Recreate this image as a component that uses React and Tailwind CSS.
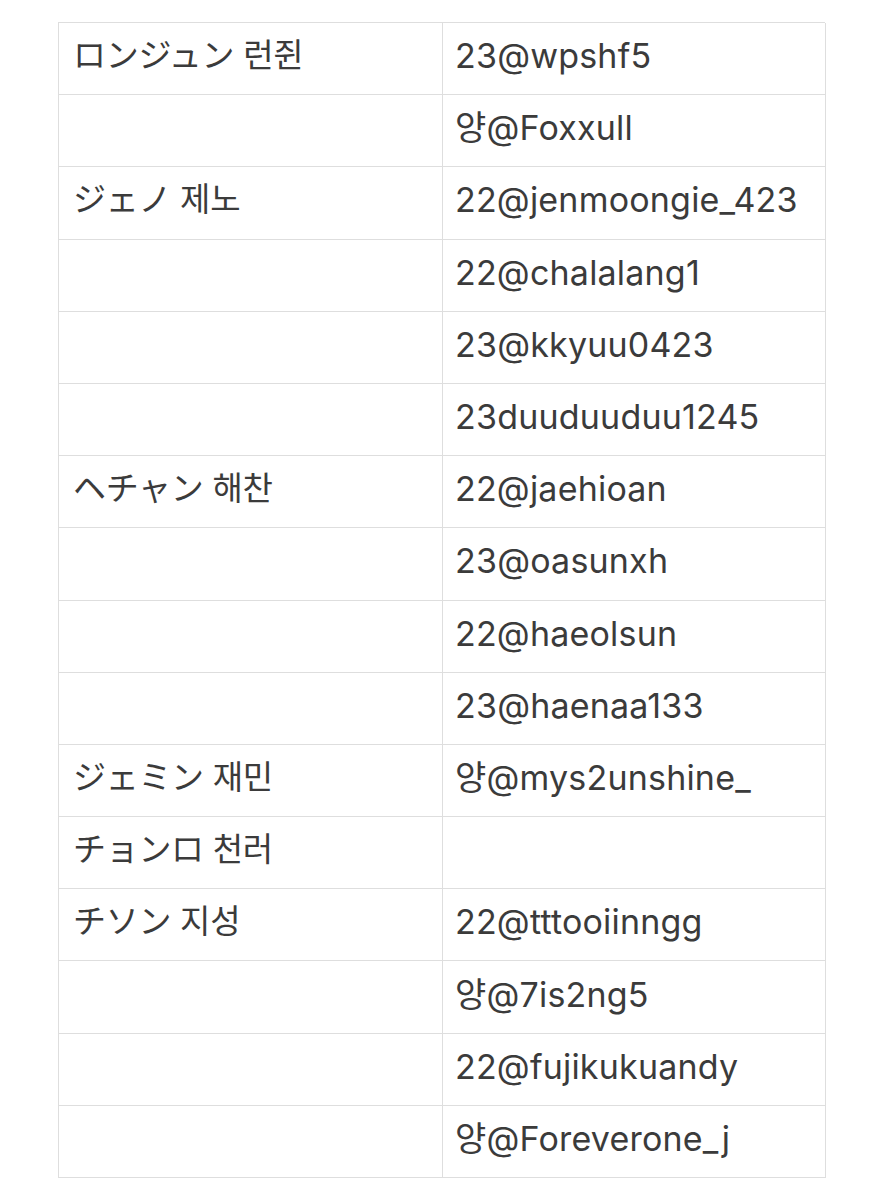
const rows = [
  ['ロンジュン 런쥔', '23@wpshf5'],
  ['', '양@Foxxull'],
  ['ジェノ 제노', '22@jenmoongie_423'],
  ['', '22@chalalang1'],
  ['', '23@kkyuu0423'],
  ['', '23duuduuduu1245'],
  ['ヘチャン 해찬', '22@jaehioan'],
  ['', '23@oasunxh'],
  ['', '22@haeolsun'],
  ['', '23@haenaa133'],
  ['ジェミン 재민', '양@mys2unshine_'],
  ['チョンロ 천러', ''],
  ['チソン 지성', '22@tttooiinngg'],
  ['', '양@7is2ng5'],
  ['', '22@fujikukuandy'],
  ['', '양@Foreverone_j'],
];

export default function App() {
  return (
    <div
      className="w-[884px] h-[1200px] bg-white pt-[22px] pl-[58px]"
      style={{ fontFamily: 'Inter, "Noto Sans CJK JP", "Noto Sans CJK KR", sans-serif' }}
    >
      <div className="w-[767px] border-t border-l border-[#dedede] grid grid-cols-[384px_383px]">
        {rows.map(([name, handle], i) => (
          <div key={i} className="contents">
            <div className="h-[72.2px] border-r border-b border-[#dedede] flex items-center pl-[14px] pb-[6px] text-[33px] tracking-[-0.3px] text-[#3b3b3b]">
              {name}
            </div>
            <div className="h-[72.2px] border-r border-b border-[#dedede] flex items-center pl-[12px] pb-[6px] text-[34px] tracking-[0.2px] text-[#3b3b3b]">
              {handle}
            </div>
          </div>
        ))}
      </div>
    </div>
  );
}
